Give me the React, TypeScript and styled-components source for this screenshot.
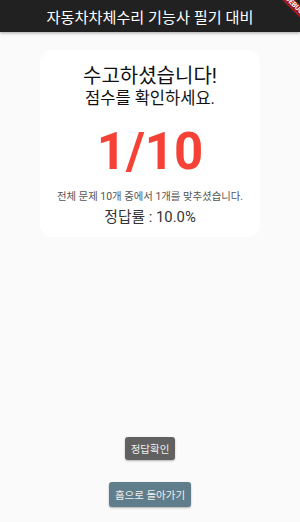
import { styled, createGlobalStyle } from 'styled-components';

const GlobalStyle = createGlobalStyle`
  html, body {
    margin: 0;
    padding: 0;
    background-color: #fafafa;
    font-family: Roboto, 'Noto Sans CJK KR', sans-serif;
  }
  * {
    box-sizing: border-box;
  }
`;

const Screen = styled.div`
  position: relative;
  display: flex;
  flex-direction: column;
  width: 300px;
  height: 522px;
  overflow: hidden;
  background-color: #fafafa;
`;

const AppBar = styled.header`
  display: flex;
  align-items: center;
  justify-content: center;
  height: 32px;
  flex-shrink: 0;
  background-color: #212121;
  box-shadow: 0 1px 3px rgba(0, 0, 0, 0.35);
  color: #ffffff;
  font-size: 15.2px;
  z-index: 1;
`;

const DebugBanner = styled.div`
  position: absolute;
  left: 264px;
  top: 1px;
  width: 60px;
  height: 9px;
  line-height: 9px;
  background-color: #9c1a20;
  color: #ffffff;
  font-size: 7px;
  font-weight: bold;
  text-align: center;
  transform: rotate(45deg);
  z-index: 2;
`;

const Card = styled.section`
  display: flex;
  flex-direction: column;
  align-items: center;
  width: 220px;
  margin: 18px auto 0;
  padding: 14px 8px 10px;
  background-color: #ffffff;
  border-radius: 12px;
`;

const Title = styled.h1`
  margin: 0;
  font-size: 20px;
  line-height: 24px;
  font-weight: 400;
  color: #111111;
`;

const SubTitle = styled.h2`
  margin: 0;
  font-size: 16.5px;
  line-height: 22px;
  font-weight: 400;
  color: #111111;
`;

const Score = styled.div`
  margin-top: 14px;
  font-size: 51px;
  line-height: 56px;
  font-weight: bold;
  color: #f44336;
`;

const Summary = styled.p`
  margin: 10px 0 0;
  font-size: 10.4px;
  line-height: 14px;
  color: #555555;
`;

const Rate = styled.p`
  margin: 3px 0 0;
  font-size: 14.8px;
  line-height: 20px;
  color: #333333;
`;

const Spacer = styled.div`
  flex: 1;
`;

const Actions = styled.div`
  display: flex;
  flex-direction: column;
  align-items: center;
  gap: 22px;
  padding-bottom: 15px;
`;

const Button = styled.button<{ $color: string; $height: number }>`
  height: ${(p) => p.$height}px;
  padding: 0 6px;
  border: none;
  border-radius: 3px;
  background-color: ${(p) => p.$color};
  color: #f0f0f0;
  font-family: Roboto, 'Noto Sans CJK KR', sans-serif;
  font-size: 10.5px;
  box-shadow: 0 1px 2px rgba(0, 0, 0, 0.3);
`;

export default function App() {
  const total = 10;
  const correct = 1;
  const rate = ((correct / total) * 100).toFixed(1);

  return (
    <>
      <GlobalStyle />
      <Screen>
        <AppBar>자동차차체수리 기능사 필기 대비</AppBar>
        <DebugBanner>DEBUG</DebugBanner>
        <Card>
          <Title>수고하셨습니다!</Title>
          <SubTitle>점수를 확인하세요.</SubTitle>
          <Score>
            {correct}/{total}
          </Score>
          <Summary>
            전체 문제 {total}개 중에서 {correct}개를 맞추셨습니다.
          </Summary>
          <Rate>정답률 : {rate}%</Rate>
        </Card>
        <Spacer />
        <Actions>
          <Button $color='#616161' $height={23}>
            정답확인
          </Button>
          <Button $color='#607d8b' $height={25}>
            홈으로 돌아가기
          </Button>
        </Actions>
      </Screen>
    </>
  );
}
